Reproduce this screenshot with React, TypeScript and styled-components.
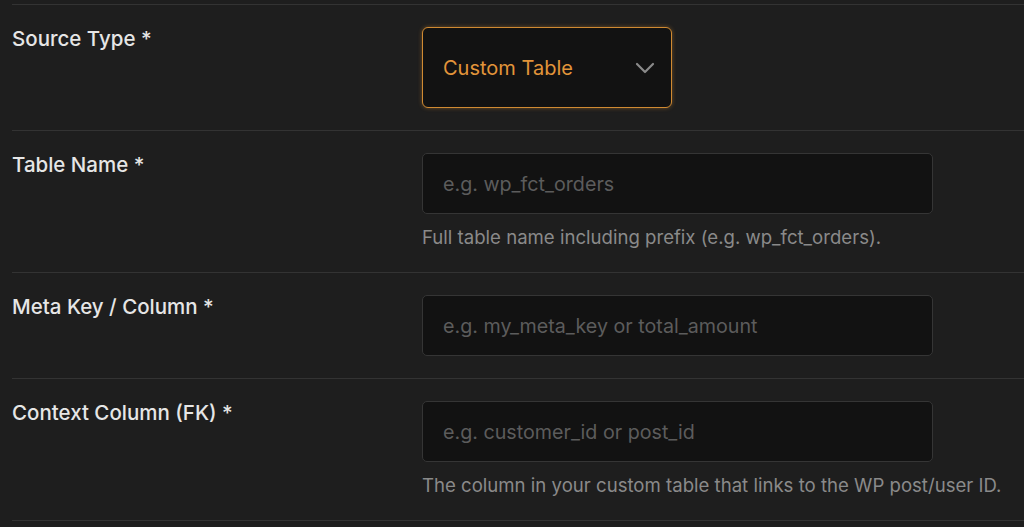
import React from 'react'
import styled, { createGlobalStyle } from 'styled-components'

const GlobalStyle = createGlobalStyle`
  html, body {
    margin: 0;
    padding: 0;
    background: #1e1e1e;
  }
  body {
    font-family: Inter, "Noto Sans", sans-serif;
    -webkit-font-smoothing: antialiased;
  }
`

const Form = styled.div`
  margin-left: 12px;
  padding-top: 4px;
`

const Row = styled.div`
  display: grid;
  grid-template-columns: 410px 1fr;
  border-top: 1px solid #333;
  padding: 22px 0;
  &:last-child {
    border-bottom: 1px solid #333;
  }
`

const Label = styled.label`
  color: #e6e6e6;
  font-size: 20.5px;
  font-weight: 500;
  line-height: 1.2;
`

const Field = styled.div`
  display: flex;
  flex-direction: column;
  align-items: flex-start;
`

const Select = styled.div`
  box-sizing: border-box;
  width: 250px;
  height: 81px;
  display: flex;
  align-items: center;
  justify-content: space-between;
  padding: 0 16px 0 20px;
  background: #121212;
  border: 1.5px solid #d08a32;
  border-radius: 6px;
  box-shadow: 0 0 4px rgba(208, 138, 50, 0.45);
  color: #e2953a;
  font-size: 20px;
`

const Input = styled.input`
  box-sizing: border-box;
  width: 511px;
  height: 61px;
  padding: 0 20px;
  background: #121212;
  border: 1px solid #353535;
  border-radius: 5px;
  color: #ddd;
  font-family: inherit;
  font-size: 19.7px;
  outline: none;
  &::placeholder {
    color: #5c5c5c;
  }
`

const Help = styled.p`
  margin: 12px 0 2px;
  color: #8a8a8a;
  font-size: 18.6px;
  line-height: 22px;
  white-space: nowrap;
`

const Chevron = () => (
  <svg width="20" height="12" viewBox="0 0 20 12" fill="none">
    <path d="M2 2l8 8 8-8" stroke="#8a8a8a" strokeWidth="2.2" strokeLinecap="round" strokeLinejoin="round" />
  </svg>
)

const fields = [
  { label: 'Table Name *', placeholder: 'e.g. wp_fct_orders', help: 'Full table name including prefix (e.g. wp_fct_orders).' },
  { label: 'Meta Key / Column *', placeholder: 'e.g. my_meta_key or total_amount' },
  { label: 'Context Column (FK) *', placeholder: 'e.g. customer_id or post_id', help: 'The column in your custom table that links to the WP post/user ID.' },
]

export default function App() {
  return (
    <>
      <GlobalStyle />
      <Form>
        <Row>
          <Label>Source Type *</Label>
          <Field>
            <Select>
              <span>Custom Table</span>
              <Chevron />
            </Select>
          </Field>
        </Row>
        {fields.map((f) => (
          <Row key={f.label}>
            <Label>{f.label}</Label>
            <Field>
              <Input placeholder={f.placeholder} />
              {f.help && <Help>{f.help}</Help>}
            </Field>
          </Row>
        ))}
      </Form>
    </>
  )
}
